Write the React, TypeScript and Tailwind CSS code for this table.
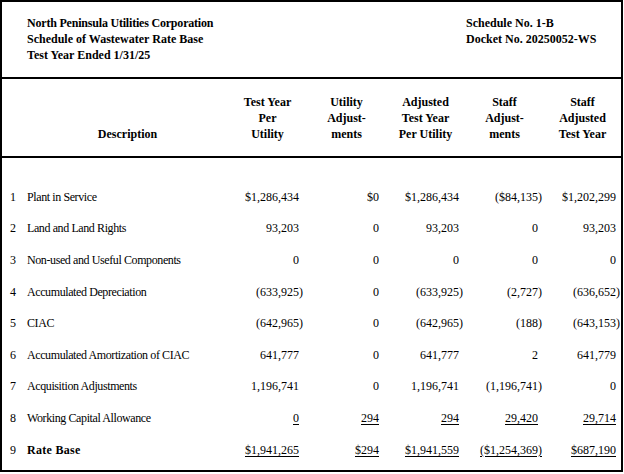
import React from "react";

type Row = { n: string; label: string; bold?: boolean; vals: string[]; underline?: boolean };

const rows: Row[] = [
  { n: "1", label: "Plant in Service", vals: ["$1,286,434", "$0", "$1,286,434", "($84,135)", "$1,202,299"] },
  { n: "2", label: "Land and Land Rights", vals: ["93,203", "0", "93,203", "0", "93,203"] },
  { n: "3", label: "Non-used and Useful Components", vals: ["0", "0", "0", "0", "0"] },
  { n: "4", label: "Accumulated Depreciation", vals: ["(633,925)", "0", "(633,925)", "(2,727)", "(636,652)"] },
  { n: "5", label: "CIAC", vals: ["(642,965)", "0", "(642,965)", "(188)", "(643,153)"] },
  { n: "6", label: "Accumulated Amortization of CIAC", vals: ["641,777", "0", "641,777", "2", "641,779"] },
  { n: "7", label: "Acquisition Adjustments", vals: ["1,196,741", "0", "1,196,741", "(1,196,741)", "0"] },
  { n: "8", label: "Working Capital Allowance", vals: ["0", "294", "294", "29,420", "29,714"], underline: true },
  { n: "9", label: "Rate Base", bold: true, vals: ["$1,941,265", "$294", "$1,941,559", "($1,254,369)", "$687,190"], underline: true },
];

const padR = ["pr-[4px]", "pr-[3px]", "pr-[2px]", "pr-[2px]", "pr-[1px]"];

const headers: string[][] = [
  ["Test Year", "Per", "Utility"],
  ["Utility", "Adjust-", "ments"],
  ["Adjusted", "Test Year", "Per Utility"],
  ["Staff", "Adjust-", "ments"],
  ["Staff", "Adjusted", "Test Year"],
];

const grid = "grid grid-cols-[25px_201px_79px_79px_79px_79px_77px]";

function Num({ v, underline }: { v: string; underline?: boolean }) {
  const paren = v.endsWith(")");
  return (
    <span className="whitespace-nowrap">
      <span className={underline ? "underline underline-offset-[1.5px]" : ""}>{v}</span>
      {!paren && <span className="invisible">)</span>}
    </span>
  );
}

export default function App() {
  return (
    <div
      className="w-[623px] h-[472px] border-2 border-black bg-white text-black flex flex-col text-[12px] leading-[16px]"
      style={{ fontFamily: '"Liberation Serif", "Times New Roman", serif' }}
    >
      <div className="h-[77px] border-b-2 border-black flex pl-[25px] pt-[13px] font-bold shrink-0">
        <div className="w-[439px]">
          <div className="tracking-[-0.2px] whitespace-nowrap">North Peninsula Utilities Corporation</div>
          <div className="whitespace-nowrap">Schedule of Wastewater Rate Base</div>
          <div className="whitespace-nowrap">Test Year Ended 1/31/25</div>
        </div>
        <div>
          <div className="whitespace-nowrap">Schedule No. 1-B</div>
          <div className="whitespace-nowrap">Docket No. 20250052-WS</div>
        </div>
      </div>
      <div className={`${grid} h-[79px] border-b-2 border-black pt-[15px] font-bold shrink-0`}>
        <div />
        <div className="flex flex-col justify-end text-center pb-[14px]">Description</div>
        {headers.map((h, i) => (
          <div key={i} className="flex flex-col text-center">
            {h.map((l, j) => (
              <div key={j} className="whitespace-nowrap">{l}</div>
            ))}
          </div>
        ))}
      </div>
      <div className="flex flex-col pt-[23px]">
        {rows.map((r) => (
          <div key={r.n} className={`${grid} h-[31.6px] items-center`}>
            <div className="pl-[8px]">{r.n}</div>
            <div className={`whitespace-nowrap ${r.bold ? "font-bold tracking-[0.3px]" : "tracking-[-0.4px]"}`}>{r.label}</div>
            {r.vals.map((v, i) => (
              <div key={i} className={`text-right ${padR[i]}`}>
                <Num v={v} underline={r.underline} />
              </div>
            ))}
          </div>
        ))}
      </div>
    </div>
  );
}
